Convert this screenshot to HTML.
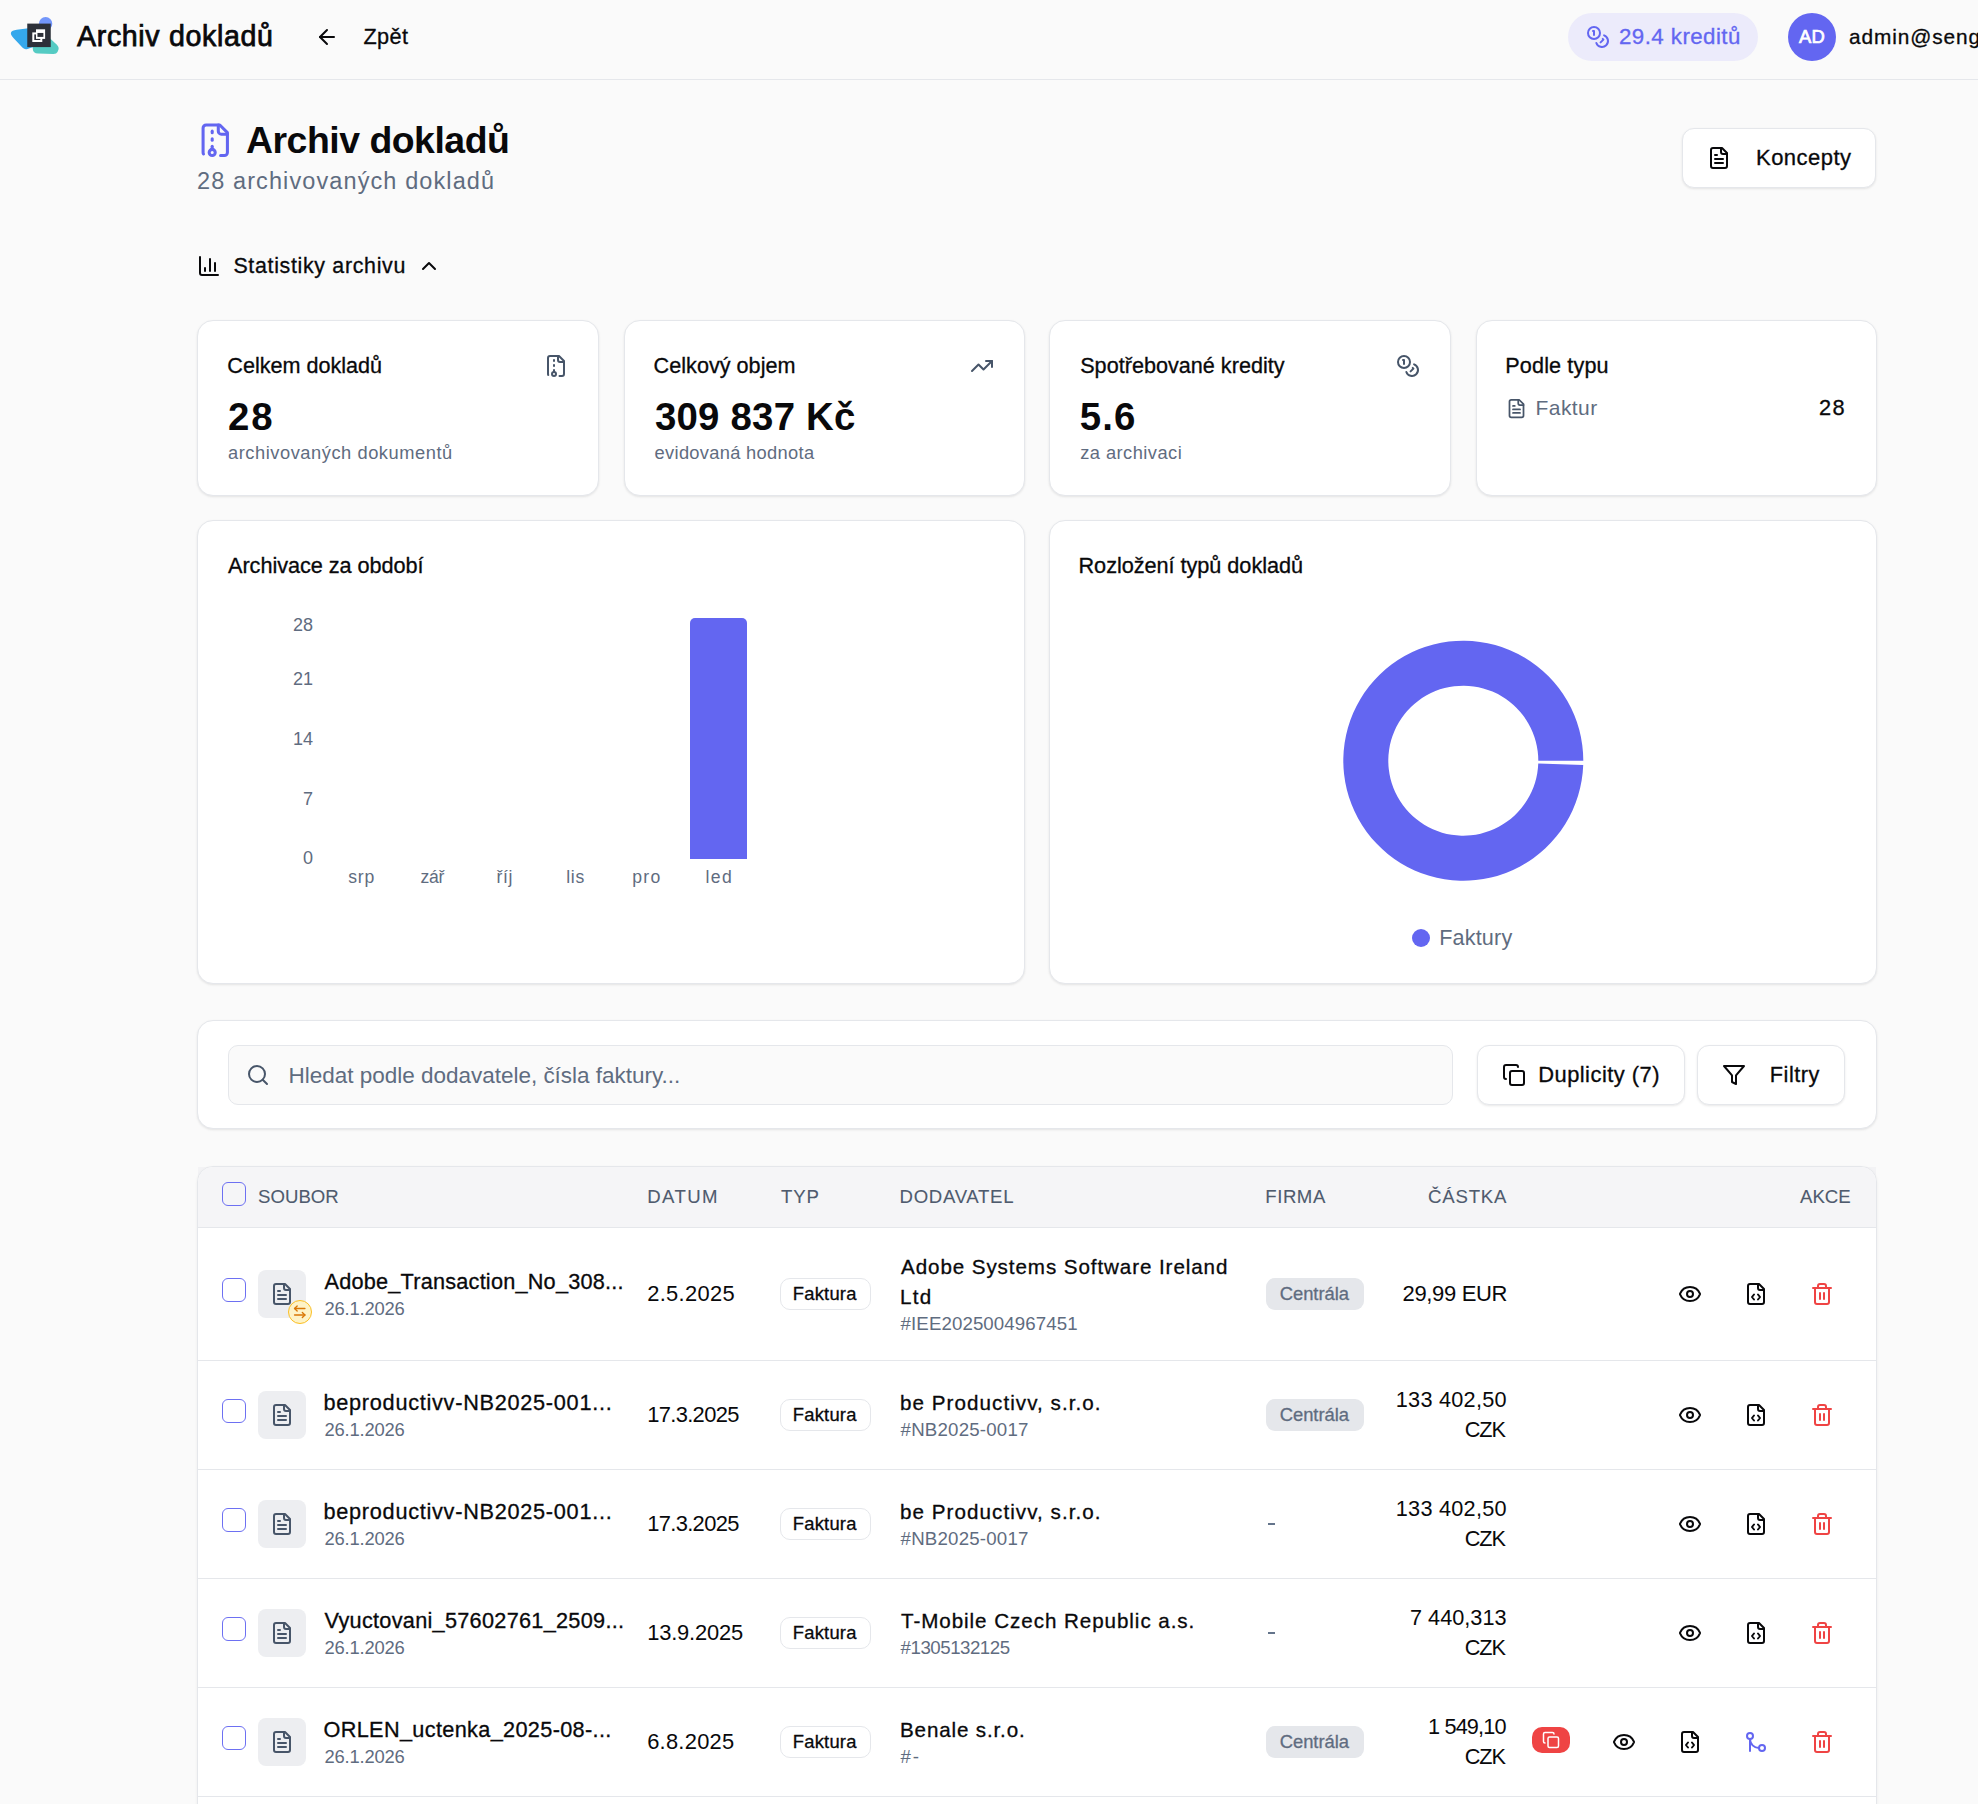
<!DOCTYPE html>
<html lang="cs"><head>
<meta charset="utf-8">
<title>Archiv dokladů</title>
<style>
html,body{margin:0;padding:0}
body{width:1978px;height:1804px;overflow:hidden;position:relative;background:#fafafa;font-family:"Liberation Sans",sans-serif;color:#09090b}
.t{position:absolute;white-space:nowrap;margin:0}
.b{position:absolute;box-sizing:border-box}
.i{position:absolute;fill:none;stroke:currentColor;stroke-width:2;stroke-linecap:round;stroke-linejoin:round;overflow:visible}
.card{position:absolute;box-sizing:border-box;background:#fff;border:1px solid #e5e7eb;border-radius:16px;box-shadow:0 1px 3px rgba(0,0,0,.06),0 1px 2px rgba(0,0,0,.04)}
.g{color:#5f6c80}
.m{-webkit-text-stroke:0.3px currentColor}
.bd{font-weight:700}
.cb{position:absolute;box-sizing:border-box;width:24px;height:24px;border:1.4px solid #6d70f2;border-radius:6px;background:#fff}
.fbox{position:absolute;width:48px;height:48px;border-radius:8px;background:#edeef1}
.badge{position:absolute;box-sizing:border-box;height:32px;border-radius:10px}
.rowline{position:absolute;left:198px;width:1678px;height:1px;background:#e5e7eb}
</style>
</head>
<body>
<!-- HEADER -->
<div class="b" style="left:0;top:79px;width:1978px;height:1px;background:#e5e7eb"></div>
<svg style="position:absolute;left:0;top:0;width:70px;height:70px" viewBox="0 0 70 70">
  <circle cx="45.6" cy="23.7" r="6.7" fill="#7396fa"></circle>
  <path d="M16.72 29.82 L40 26.8 L40 44.5 L27.53 48.9 Q24.7 49.9 22.63 47.73 L13.7 38.34 Q6.8 31.1 16.72 29.82 Z" fill="#35a8ec"></path>
  <path d="M42 31 L55 43 Q59.5 46.5 58.5 49.5 L57.5 52 Q56.5 54.2 53 54 L38 53.5 Q33 53.3 32.8 49 L32.5 44 Z" fill="#55cbc3"></path>
  <rect x="27.25" y="23.6" width="23.5" height="23.5" fill="#2d3039"></rect>
  <rect x="33.3" y="33.4" width="8" height="7.6" fill="none" stroke="#fff" stroke-width="2"></rect>
  <rect x="36" y="29.3" width="9.1" height="9.6" fill="#fff"></rect>
  <rect x="37.45" y="32.95" width="5.95" height="3.95" fill="#2d3039"></rect>
</svg>
<div class="t" style="-webkit-text-stroke: 0.75px rgb(9, 9, 11); font-size: 28.6px; line-height: 28.6px; top: 22px; letter-spacing: 0.643px; left: 77px;">Archiv dokladů</div>
<svg class="i" style="left:315px;top:25px;width:24px;height:24px;color:#09090b" viewBox="0 0 24 24"><path d="m12 19-7-7 7-7"></path><path d="M19 12H5"></path></svg>
<div class="t m" style="font-size: 21.7px; line-height: 21.7px; top: 26.01px; letter-spacing: 0.376px; left: 363.5px;">Zpět</div>

<div class="b" style="left:1568px;top:13px;width:190px;height:48px;border-radius:24px;background:#ecebfb"></div>
<svg class="i" style="left:1586px;top:25px;width:24px;height:24px;color:#6366f1" viewBox="0 0 24 24"><circle cx="8" cy="8" r="6"></circle><path d="M18.09 10.37A6 6 0 1 1 10.34 18"></path><path d="M7 6h1v4"></path><path d="m16.71 13.88.7.71-2.82 2.82"></path></svg>
<div class="t m" style="color: rgb(99, 102, 241); font-size: 22.3px; line-height: 22.3px; top: 26px; letter-spacing: 0.444px; left: 1619px;">29.4 kreditů</div>
<div class="b" style="left:1788px;top:13px;width:48px;height:48px;border-radius:50%;background:#6366f1"></div>
<div class="t" style="color: rgb(255, 255, 255); -webkit-text-stroke: 0.7px rgb(255, 255, 255); font-size: 18.4px; line-height: 18.4px; top: 28.3px; letter-spacing: 0.234px; left: 1799px;">AD</div>
<div class="t m" style="font-size: 20.8px; line-height: 20.8px; top: 27.01px; letter-spacing: 0.9px; left: 1849px;">admin@seng.cz</div>

<!-- PAGE TITLE -->
<svg class="i" style="left:197px;top:121.5px;width:36.5px;height:36.5px;color:#6366f1" viewBox="0 0 24 24"><path d="M10 12v-1"></path><path d="M10 18v-2"></path><path d="M10 7V6"></path><path d="M14 2v4a2 2 0 0 0 2 2h4"></path><path d="M15.5 22H18a2 2 0 0 0 2-2V7l-5-5H6a2 2 0 0 0-2 2v16a2 2 0 0 0 .274 1.01"></path><circle cx="10" cy="20" r="2"></circle></svg>
<div class="t bd" style="font-size: 37.4px; line-height: 37.4px; top: 122.01px; letter-spacing: -0.481px; left: 246px;">Archiv dokladů</div>
<div class="t g" style="font-size: 23.5px; line-height: 23.5px; top: 170.21px; letter-spacing: 1.102px; left: 197px;">28 archivovaných dokladů</div>

<div class="card" style="left:1682px;top:128px;width:194px;height:60px;border-radius:12px"></div>
<svg class="i" style="left:1707px;top:146px;width:24px;height:24px;color:#09090b" viewBox="0 0 24 24"><path d="M15 2H6a2 2 0 0 0-2 2v16a2 2 0 0 0 2 2h12a2 2 0 0 0 2-2V7Z"></path><path d="M14 2v4a2 2 0 0 0 2 2h4"></path><path d="M10 9H8"></path><path d="M16 13H8"></path><path d="M16 17H8"></path></svg>
<div class="t m" style="font-size: 22px; line-height: 22px; top: 147px; letter-spacing: 0.467px; left: 1756px;">Koncepty</div>

<!-- STATS TOGGLE -->
<svg class="i" style="left:197px;top:254px;width:24px;height:24px;color:#09090b" viewBox="0 0 24 24"><path d="M3 3v16a2 2 0 0 0 2 2h16"></path><path d="M18 17V9"></path><path d="M13 17V5"></path><path d="M8 17v-3"></path></svg>
<div class="t m" style="font-size: 21.4px; line-height: 21.4px; top: 255.51px; letter-spacing: 0.677px; left: 233.4px;">Statistiky archivu</div>
<svg class="i" style="left:417px;top:254px;width:24px;height:24px;color:#09090b" viewBox="0 0 24 24"><path d="m18 15-6-6-6 6"></path></svg>

<!-- STAT CARDS -->
<div class="card" style="left:197px;top:320px;width:402px;height:176px"></div>
<div class="card" style="left:624px;top:320px;width:401px;height:176px"></div>
<div class="card" style="left:1049px;top:320px;width:402px;height:176px"></div>
<div class="card" style="left:1476px;top:320px;width:401px;height:176px"></div>

<div class="t m" style="font-size: 21.6px; line-height: 21.6px; top: 355.02px; letter-spacing: -0.01px; left: 227.3px;">Celkem dokladů</div>
<svg class="i" style="left:543.7px;top:354px;width:24px;height:24px;color:#475569;stroke-width:2" viewBox="0 0 24 24"><path d="M10 12v-1"></path><path d="M10 18v-2"></path><path d="M10 7V6"></path><path d="M14 2v4a2 2 0 0 0 2 2h4"></path><path d="M15.5 22H18a2 2 0 0 0 2-2V7l-5-5H6a2 2 0 0 0-2 2v16a2 2 0 0 0 .274 1.01"></path><circle cx="10" cy="20" r="2"></circle></svg>
<div class="t bd" style="font-size: 38.4px; line-height: 38.4px; top: 398px; letter-spacing: 1.949px; left: 228px;">28</div>
<div class="t g" style="font-size: 18.3px; line-height: 18.3px; top: 443.51px; letter-spacing: 0.536px; left: 228px;">archivovaných dokumentů</div>

<div class="t m" style="font-size: 21.6px; line-height: 21.6px; top: 355.3px; letter-spacing: 0.023px; left: 653.6px;">Celkový objem</div>
<svg class="i" style="left:970px;top:353.6px;width:24px;height:24px;color:#475569;stroke-width:2" viewBox="0 0 24 24"><polyline points="22 7 13.5 15.5 8.5 10.5 2 17"></polyline><polyline points="16 7 22 7 22 13"></polyline></svg>
<div class="t bd" style="font-size: 38.4px; line-height: 38.4px; top: 397.8px; letter-spacing: 0.204px; left: 655px;">309 837 Kč</div>
<div class="t g" style="font-size: 18.3px; line-height: 18.3px; top: 443.8px; letter-spacing: 0.31px; left: 654.6px;">evidovaná hodnota</div>

<div class="t m" style="font-size: 21.6px; line-height: 21.6px; top: 355.02px; letter-spacing: 0.017px; left: 1080.2px;">Spotřebované kredity</div>
<svg class="i" style="left:1396px;top:354px;width:24px;height:24px;color:#475569;stroke-width:2" viewBox="0 0 24 24"><circle cx="8" cy="8" r="6"></circle><path d="M18.09 10.37A6 6 0 1 1 10.34 18"></path><path d="M7 6h1v4"></path><path d="m16.71 13.88.7.71-2.82 2.82"></path></svg>
<div class="t bd" style="font-size: 38.4px; line-height: 38.4px; top: 397.91px; letter-spacing: 1.141px; left: 1079.7px;">5.6</div>
<div class="t g" style="font-size: 18.3px; line-height: 18.3px; top: 443.71px; letter-spacing: 0.458px; left: 1080.2px;">za archivaci</div>

<div class="t m" style="font-size: 21.6px; line-height: 21.6px; top: 355.02px; letter-spacing: 0.141px; left: 1505.3px;">Podle typu</div>
<svg class="i" style="left:1505.5px;top:398px;width:21px;height:21px;color:#475569;stroke-width:2" viewBox="0 0 24 24"><path d="M15 2H6a2 2 0 0 0-2 2v16a2 2 0 0 0 2 2h12a2 2 0 0 0 2-2V7Z"></path><path d="M14 2v4a2 2 0 0 0 2 2h4"></path><path d="M10 9H8"></path><path d="M16 13H8"></path><path d="M16 17H8"></path></svg>
<div class="t g" style="font-size: 21px; line-height: 21px; top: 396.51px; letter-spacing: 0.436px; left: 1535.5px;">Faktur</div>
<div class="t m" style="font-size: 21.8px; line-height: 21.8px; top: 396.5px; letter-spacing: 1.378px; left: 1819px;">28</div>

<!-- CHARTS -->
<div class="card" style="left:197px;top:520px;width:828px;height:464px"></div>
<div class="card" style="left:1049px;top:520px;width:828px;height:464px"></div>
<div class="t m" style="font-size: 21.7px; line-height: 21.7px; top: 554.81px; letter-spacing: -0.049px; left: 228px;">Archivace za období</div>
<div class="t g" style="font-size: 18px; line-height: 18px; top: 615.8px; left: 292.99px;">28</div>
<div class="t g" style="font-size: 18px; line-height: 18px; top: 669.8px; left: 292.99px;">21</div>
<div class="t g" style="font-size: 18px; line-height: 18px; top: 730.01px; left: 292.99px;">14</div>
<div class="t g" style="font-size: 18px; line-height: 18px; top: 789.6px; left: 303px;">7</div>
<div class="t g" style="font-size: 18px; line-height: 18px; top: 849.41px; left: 303px;">0</div>
<div class="b" style="left:690px;top:618.3px;width:57px;height:240.3px;background:#6366f1;border-radius:5px 5px 0 0"></div>
<div class="t g" style="font-size: 17.6px; line-height: 17.6px; top: 868.71px; letter-spacing: 0.772px; left: 348.2px;">srp</div>
<div class="t g" style="font-size: 17.6px; line-height: 17.6px; top: 868.71px; letter-spacing: -0.291px; left: 420.5px;">zář</div>
<div class="t g" style="font-size: 17.6px; line-height: 17.6px; top: 868.71px; letter-spacing: 0.627px; left: 496.6px;">říj</div>
<div class="t g" style="font-size: 17.6px; line-height: 17.6px; top: 868.71px; letter-spacing: 0.641px; left: 566.3px;">lis</div>
<div class="t g" style="font-size: 17.6px; line-height: 17.6px; top: 868.71px; letter-spacing: 1.228px; left: 632.3px;">pro</div>
<div class="t g" style="font-size: 17.6px; line-height: 17.6px; top: 868.71px; letter-spacing: 1.403px; left: 705.5px;">led</div>

<div class="t m" style="font-size: 21.7px; line-height: 21.7px; top: 554.81px; letter-spacing: -0.042px; left: 1078.5px;">Rozložení typů dokladů</div>
<svg style="position:absolute;left:0;top:0;width:1978px;height:1000px;overflow:visible" viewBox="0 0 1978 1000"><path fill="#6366f1" d="M1583.22 765.10 A120 120 0 1 1 1583.3 760.7 L1538.3 760.7 A75 75 0 1 0 1538.25 763.45 Z"></path></svg>
<div class="b" style="left:1412px;top:929px;width:18px;height:18px;border-radius:50%;background:#6366f1"></div>
<div class="t g" style="font-size: 21.6px; line-height: 21.6px; top: 926.91px; letter-spacing: 0.167px; left: 1439.2px;">Faktury</div>

<!-- SEARCH -->
<div class="card" style="left:197px;top:1020px;width:1680px;height:109px"></div>
<div class="b" style="left:228px;top:1045px;width:1225px;height:60px;border-radius:10px;background:#fafafa;border:1px solid #e5e7eb"></div>
<svg class="i" style="left:246px;top:1063px;width:24px;height:24px;color:#475569" viewBox="0 0 24 24"><circle cx="11" cy="11" r="8"></circle><path d="m21 21-4.3-4.3"></path></svg>
<div class="t g" style="font-size: 22.5px; line-height: 22.5px; top: 1064.91px; letter-spacing: -0.016px; left: 288.6px;">Hledat podle dodavatele, čísla faktury...</div>
<div class="card" style="left:1477px;top:1045px;width:208px;height:60px;border-radius:12px"></div>
<svg class="i" style="left:1502px;top:1063px;width:24px;height:24px;color:#09090b" viewBox="0 0 24 24"><rect width="14" height="14" x="8" y="8" rx="2" ry="2"></rect><path d="M4 16c-1.1 0-2-.9-2-2V4c0-1.1.9-2 2-2h10c1.1 0 2 .9 2 2"></path></svg>
<div class="t m" style="font-size: 21.9px; line-height: 21.9px; top: 1063.91px; letter-spacing: 0.478px; left: 1538.2px;">Duplicity (7)</div>
<div class="card" style="left:1697px;top:1045px;width:148px;height:60px;border-radius:12px"></div>
<svg class="i" style="left:1722px;top:1063px;width:24px;height:24px;color:#09090b" viewBox="0 0 24 24"><polygon points="22 3 2 3 10 12.46 10 19 14 21 14 12.46 22 3"></polygon></svg>
<div class="t m" style="font-size: 21.7px; line-height: 21.7px; top: 1064.01px; letter-spacing: 0.534px; left: 1769.8px;">Filtry</div>

<div class="b" style="left:1862px;top:1167px;width:14px;height:14px;background:#f3f3f5"></div>
<div class="b" style="left:198px;top:1167px;width:14px;height:14px;background:#f3f3f5"></div>
<div class="b" style="left:197px;top:1166px;width:1680px;height:700px;background:#fff;border:1px solid #e5e7eb;border-radius:16px;box-shadow:0 1px 3px rgba(0,0,0,.06)"></div>
<div class="b" style="left:198px;top:1167px;width:1678px;height:61px;background:#f5f5f7;border-radius:15px 15px 0 0;border-bottom:1px solid #e5e7eb"></div>
<div class="cb" style="left:222px;top:1182px;background:transparent"></div>
<div class="t " style="color: rgb(79, 91, 110); -webkit-text-stroke: 0.1px rgb(79, 91, 110); font-size: 18.6px; line-height: 18.6px; top: 1188px; letter-spacing: 0.029px; left: 258px;">SOUBOR</div>
<div class="t " style="color: rgb(79, 91, 110); -webkit-text-stroke: 0.1px rgb(79, 91, 110); font-size: 18.6px; line-height: 18.6px; top: 1188px; letter-spacing: 1.341px; left: 647.3px;">DATUM</div>
<div class="t " style="color: rgb(79, 91, 110); -webkit-text-stroke: 0.1px rgb(79, 91, 110); font-size: 18.6px; line-height: 18.6px; top: 1188px; letter-spacing: 0.82px; left: 781px;">TYP</div>
<div class="t " style="color: rgb(79, 91, 110); -webkit-text-stroke: 0.1px rgb(79, 91, 110); font-size: 18.6px; line-height: 18.6px; top: 1188px; letter-spacing: 0.682px; left: 899.6px;">DODAVATEL</div>
<div class="t " style="color: rgb(79, 91, 110); -webkit-text-stroke: 0.1px rgb(79, 91, 110); font-size: 18.6px; line-height: 18.6px; top: 1188px; letter-spacing: 0.54px; left: 1265.3px;">FIRMA</div>
<div class="t " style="color: rgb(79, 91, 110); -webkit-text-stroke: 0.1px rgb(79, 91, 110); font-size: 18.6px; line-height: 18.6px; top: 1188px; letter-spacing: 0.802px; left: 1428px;">ČÁSTKA</div>
<div class="t " style="color: rgb(79, 91, 110); -webkit-text-stroke: 0.1px rgb(79, 91, 110); font-size: 18.6px; line-height: 18.6px; top: 1188px; letter-spacing: 0.023px; left: 1800px;">AKCE</div>
<div class="rowline" style="top:1360px"></div>
<div class="cb" style="left:222px;top:1278px"></div>
<div class="fbox" style="left:258px;top:1270px"></div>
<svg class="i" style="left:270px;top:1282px;width:24px;height:24px;color:#475569;stroke-width:2" viewBox="0 0 24 24"><path d="M15 2H6a2 2 0 0 0-2 2v16a2 2 0 0 0 2 2h12a2 2 0 0 0 2-2V7Z"></path><path d="M14 2v4a2 2 0 0 0 2 2h4"></path><path d="M10 9H8"></path><path d="M16 13H8"></path><path d="M16 17H8"></path></svg>
<div class="b" style="left:288px;top:1300px;width:24px;height:24px;border-radius:50%;background:#fef3c7;border:1px solid #fbbf24"></div>
<svg class="i" style="left:292px;top:1303.7px;width:15.5px;height:15.5px;color:#d97706;stroke-width:2.1" viewBox="0 0 24 24"><path d="M8 3 4 7l4 4"></path><path d="M4 7h16"></path><path d="m16 21 4-4-4-4"></path><path d="M20 17H4"></path></svg>
<div class="t m" style="font-size: 21.7px; line-height: 21.7px; top: 1271.01px; letter-spacing: 0.217px; left: 324.5px;">Adobe_Transaction_No_308...</div>
<div class="t g" style="font-size: 18.4px; line-height: 18.4px; top: 1299.91px; letter-spacing: -0.186px; left: 324.5px;">26.1.2026</div>
<div class="t " style="font-size: 21.9px; line-height: 21.9px; top: 1282.61px; letter-spacing: 0.309px; left: 647.2px;">2.5.2025</div>
<div class="badge" style="left:780px;top:1278px;width:91px;background:#fff;border:1px solid #e5e7eb"></div>
<div class="t m" style="font-size: 18.4px; line-height: 18.4px; top: 1284.71px; letter-spacing: 0.214px; left: 792.8px;">Faktura</div>
<div class="t m" style="font-size: 20.6px; line-height: 20.6px; top: 1256.7px; letter-spacing: 0.915px; left: 901px;">Adobe Systems Software Ireland</div>
<div class="t m" style="font-size: 20.6px; line-height: 20.6px; top: 1286.76px; letter-spacing: 1.263px; left: 900px;">Ltd</div>
<div class="t g" style="font-size: 18.7px; line-height: 18.7px; top: 1314.61px; letter-spacing: 0.086px; left: 900.6px;">#IEE2025004967451</div>
<div class="badge" style="left:1266px;top:1278px;width:98px;background:#e5e7eb;border-radius:9px"></div>
<div class="t g m" style="font-size: 18.4px; line-height: 18.4px; top: 1284.61px; letter-spacing: -0.026px; left: 1279.7px;">Centrála</div>
<div class="t " style="font-size: 22px; line-height: 22px; top: 1283px; letter-spacing: -0.353px; left: 1402.6px;">29,99 EUR</div>
<svg class="i" style="left:1678px;top:1282px;width:24px;height:24px;color:#09090b;stroke-width:2" viewBox="0 0 24 24"><path d="M2.062 12.348a1 1 0 0 1 0-.696 10.75 10.75 0 0 1 19.876 0 1 1 0 0 1 0 .696 10.75 10.75 0 0 1-19.876 0"></path><circle cx="12" cy="12" r="3"></circle></svg>
<svg class="i" style="left:1744px;top:1282px;width:24px;height:24px;color:#09090b;stroke-width:2" viewBox="0 0 24 24"><path d="M10 12.5 8 15l2 2.5"></path><path d="m14 12.5 2 2.5-2 2.5"></path><path d="M14 2v4a2 2 0 0 0 2 2h4"></path><path d="M15 2H6a2 2 0 0 0-2 2v16a2 2 0 0 0 2 2h12a2 2 0 0 0 2-2V7z"></path></svg>
<svg class="i" style="left:1810px;top:1282px;width:24px;height:24px;color:#ef4444;stroke-width:2" viewBox="0 0 24 24"><path d="M3 6h18"></path><path d="M19 6v14c0 1-1 2-2 2H7c-1 0-2-1-2-2V6"></path><path d="M8 6V4c0-1 1-2 2-2h4c1 0 2 1 2 2v2"></path><line x1="10" x2="10" y1="11" y2="17"></line><line x1="14" x2="14" y1="11" y2="17"></line></svg>
<div class="rowline" style="top:1469px"></div>
<div class="cb" style="left:222px;top:1399px"></div>
<div class="fbox" style="left:258px;top:1391px"></div>
<svg class="i" style="left:270px;top:1403px;width:24px;height:24px;color:#475569;stroke-width:2" viewBox="0 0 24 24"><path d="M15 2H6a2 2 0 0 0-2 2v16a2 2 0 0 0 2 2h12a2 2 0 0 0 2-2V7Z"></path><path d="M14 2v4a2 2 0 0 0 2 2h4"></path><path d="M10 9H8"></path><path d="M16 13H8"></path><path d="M16 17H8"></path></svg>
<div class="t m" style="font-size: 21.7px; line-height: 21.7px; top: 1392.01px; letter-spacing: 0.727px; left: 323.5px;">beproductivv-NB2025-001...</div>
<div class="t g" style="font-size: 18.4px; line-height: 18.4px; top: 1420.91px; letter-spacing: -0.186px; left: 324.5px;">26.1.2026</div>
<div class="t " style="font-size: 21.9px; line-height: 21.9px; top: 1403.61px; letter-spacing: -0.651px; left: 647.2px;">17.3.2025</div>
<div class="badge" style="left:780px;top:1399px;width:91px;background:#fff;border:1px solid #e5e7eb"></div>
<div class="t m" style="font-size: 18.4px; line-height: 18.4px; top: 1405.71px; letter-spacing: 0.214px; left: 792.8px;">Faktura</div>
<div class="t m" style="font-size: 20.6px; line-height: 20.6px; top: 1393.01px; letter-spacing: 1.06px; left: 900px;">be Productivv, s.r.o.</div>
<div class="t g" style="font-size: 18.7px; line-height: 18.7px; top: 1420.71px; letter-spacing: 0.188px; left: 900.6px;">#NB2025-0017</div>
<div class="badge" style="left:1266px;top:1399px;width:98px;background:#e5e7eb;border-radius:9px"></div>
<div class="t g m" style="font-size: 18.4px; line-height: 18.4px; top: 1405.61px; letter-spacing: -0.026px; left: 1279.7px;">Centrála</div>
<div class="t " style="font-size: 21.7px; line-height: 21.7px; top: 1388.71px; letter-spacing: 0.246px; left: 1395.8px;">133 402,50</div>
<div class="t " style="font-size: 21.7px; line-height: 21.7px; top: 1418.71px; letter-spacing: -1.105px; left: 1464.8px;">CZK</div>
<svg class="i" style="left:1678px;top:1403px;width:24px;height:24px;color:#09090b;stroke-width:2" viewBox="0 0 24 24"><path d="M2.062 12.348a1 1 0 0 1 0-.696 10.75 10.75 0 0 1 19.876 0 1 1 0 0 1 0 .696 10.75 10.75 0 0 1-19.876 0"></path><circle cx="12" cy="12" r="3"></circle></svg>
<svg class="i" style="left:1744px;top:1403px;width:24px;height:24px;color:#09090b;stroke-width:2" viewBox="0 0 24 24"><path d="M10 12.5 8 15l2 2.5"></path><path d="m14 12.5 2 2.5-2 2.5"></path><path d="M14 2v4a2 2 0 0 0 2 2h4"></path><path d="M15 2H6a2 2 0 0 0-2 2v16a2 2 0 0 0 2 2h12a2 2 0 0 0 2-2V7z"></path></svg>
<svg class="i" style="left:1810px;top:1403px;width:24px;height:24px;color:#ef4444;stroke-width:2" viewBox="0 0 24 24"><path d="M3 6h18"></path><path d="M19 6v14c0 1-1 2-2 2H7c-1 0-2-1-2-2V6"></path><path d="M8 6V4c0-1 1-2 2-2h4c1 0 2 1 2 2v2"></path><line x1="10" x2="10" y1="11" y2="17"></line><line x1="14" x2="14" y1="11" y2="17"></line></svg>
<div class="rowline" style="top:1578px"></div>
<div class="cb" style="left:222px;top:1508px"></div>
<div class="fbox" style="left:258px;top:1500px"></div>
<svg class="i" style="left:270px;top:1512px;width:24px;height:24px;color:#475569;stroke-width:2" viewBox="0 0 24 24"><path d="M15 2H6a2 2 0 0 0-2 2v16a2 2 0 0 0 2 2h12a2 2 0 0 0 2-2V7Z"></path><path d="M14 2v4a2 2 0 0 0 2 2h4"></path><path d="M10 9H8"></path><path d="M16 13H8"></path><path d="M16 17H8"></path></svg>
<div class="t m" style="font-size: 21.7px; line-height: 21.7px; top: 1501.01px; letter-spacing: 0.727px; left: 323.5px;">beproductivv-NB2025-001...</div>
<div class="t g" style="font-size: 18.4px; line-height: 18.4px; top: 1529.91px; letter-spacing: -0.186px; left: 324.5px;">26.1.2026</div>
<div class="t " style="font-size: 21.9px; line-height: 21.9px; top: 1512.61px; letter-spacing: -0.651px; left: 647.2px;">17.3.2025</div>
<div class="badge" style="left:780px;top:1508px;width:91px;background:#fff;border:1px solid #e5e7eb"></div>
<div class="t m" style="font-size: 18.4px; line-height: 18.4px; top: 1514.71px; letter-spacing: 0.214px; left: 792.8px;">Faktura</div>
<div class="t m" style="font-size: 20.6px; line-height: 20.6px; top: 1502.01px; letter-spacing: 1.06px; left: 900px;">be Productivv, s.r.o.</div>
<div class="t g" style="font-size: 18.7px; line-height: 18.7px; top: 1529.71px; letter-spacing: 0.188px; left: 900.6px;">#NB2025-0017</div>
<div class="b" style="left:1267.5px;top:1523px;width:7px;height:2px;background:#64748b"></div>
<div class="t " style="font-size: 21.7px; line-height: 21.7px; top: 1497.71px; letter-spacing: 0.246px; left: 1395.8px;">133 402,50</div>
<div class="t " style="font-size: 21.7px; line-height: 21.7px; top: 1527.71px; letter-spacing: -1.105px; left: 1464.8px;">CZK</div>
<svg class="i" style="left:1678px;top:1512px;width:24px;height:24px;color:#09090b;stroke-width:2" viewBox="0 0 24 24"><path d="M2.062 12.348a1 1 0 0 1 0-.696 10.75 10.75 0 0 1 19.876 0 1 1 0 0 1 0 .696 10.75 10.75 0 0 1-19.876 0"></path><circle cx="12" cy="12" r="3"></circle></svg>
<svg class="i" style="left:1744px;top:1512px;width:24px;height:24px;color:#09090b;stroke-width:2" viewBox="0 0 24 24"><path d="M10 12.5 8 15l2 2.5"></path><path d="m14 12.5 2 2.5-2 2.5"></path><path d="M14 2v4a2 2 0 0 0 2 2h4"></path><path d="M15 2H6a2 2 0 0 0-2 2v16a2 2 0 0 0 2 2h12a2 2 0 0 0 2-2V7z"></path></svg>
<svg class="i" style="left:1810px;top:1512px;width:24px;height:24px;color:#ef4444;stroke-width:2" viewBox="0 0 24 24"><path d="M3 6h18"></path><path d="M19 6v14c0 1-1 2-2 2H7c-1 0-2-1-2-2V6"></path><path d="M8 6V4c0-1 1-2 2-2h4c1 0 2 1 2 2v2"></path><line x1="10" x2="10" y1="11" y2="17"></line><line x1="14" x2="14" y1="11" y2="17"></line></svg>
<div class="rowline" style="top:1687px"></div>
<div class="cb" style="left:222px;top:1617px"></div>
<div class="fbox" style="left:258px;top:1609px"></div>
<svg class="i" style="left:270px;top:1621px;width:24px;height:24px;color:#475569;stroke-width:2" viewBox="0 0 24 24"><path d="M15 2H6a2 2 0 0 0-2 2v16a2 2 0 0 0 2 2h12a2 2 0 0 0 2-2V7Z"></path><path d="M14 2v4a2 2 0 0 0 2 2h4"></path><path d="M10 9H8"></path><path d="M16 13H8"></path><path d="M16 17H8"></path></svg>
<div class="t m" style="font-size: 21.7px; line-height: 21.7px; top: 1610.01px; letter-spacing: 0.281px; left: 324.5px;">Vyuctovani_57602761_2509...</div>
<div class="t g" style="font-size: 18.4px; line-height: 18.4px; top: 1638.91px; letter-spacing: -0.186px; left: 324.5px;">26.1.2026</div>
<div class="t " style="font-size: 21.9px; line-height: 21.9px; top: 1621.61px; letter-spacing: -0.176px; left: 647.2px;">13.9.2025</div>
<div class="badge" style="left:780px;top:1617px;width:91px;background:#fff;border:1px solid #e5e7eb"></div>
<div class="t m" style="font-size: 18.4px; line-height: 18.4px; top: 1623.71px; letter-spacing: 0.214px; left: 792.8px;">Faktura</div>
<div class="t m" style="font-size: 20.6px; line-height: 20.6px; top: 1611.01px; letter-spacing: 0.944px; left: 901px;">T-Mobile Czech Republic a.s.</div>
<div class="t g" style="font-size: 18.7px; line-height: 18.7px; top: 1638.71px; letter-spacing: -0.483px; left: 900.6px;">#1305132125</div>
<div class="b" style="left:1267.5px;top:1632px;width:7px;height:2px;background:#64748b"></div>
<div class="t " style="font-size: 21.7px; line-height: 21.7px; top: 1606.71px; letter-spacing: 0.01px; left: 1410px;">7 440,313</div>
<div class="t " style="font-size: 21.7px; line-height: 21.7px; top: 1636.71px; letter-spacing: -1.105px; left: 1464.8px;">CZK</div>
<svg class="i" style="left:1678px;top:1621px;width:24px;height:24px;color:#09090b;stroke-width:2" viewBox="0 0 24 24"><path d="M2.062 12.348a1 1 0 0 1 0-.696 10.75 10.75 0 0 1 19.876 0 1 1 0 0 1 0 .696 10.75 10.75 0 0 1-19.876 0"></path><circle cx="12" cy="12" r="3"></circle></svg>
<svg class="i" style="left:1744px;top:1621px;width:24px;height:24px;color:#09090b;stroke-width:2" viewBox="0 0 24 24"><path d="M10 12.5 8 15l2 2.5"></path><path d="m14 12.5 2 2.5-2 2.5"></path><path d="M14 2v4a2 2 0 0 0 2 2h4"></path><path d="M15 2H6a2 2 0 0 0-2 2v16a2 2 0 0 0 2 2h12a2 2 0 0 0 2-2V7z"></path></svg>
<svg class="i" style="left:1810px;top:1621px;width:24px;height:24px;color:#ef4444;stroke-width:2" viewBox="0 0 24 24"><path d="M3 6h18"></path><path d="M19 6v14c0 1-1 2-2 2H7c-1 0-2-1-2-2V6"></path><path d="M8 6V4c0-1 1-2 2-2h4c1 0 2 1 2 2v2"></path><line x1="10" x2="10" y1="11" y2="17"></line><line x1="14" x2="14" y1="11" y2="17"></line></svg>
<div class="rowline" style="top:1796px"></div>
<div class="cb" style="left:222px;top:1726px"></div>
<div class="fbox" style="left:258px;top:1718px"></div>
<svg class="i" style="left:270px;top:1730px;width:24px;height:24px;color:#475569;stroke-width:2" viewBox="0 0 24 24"><path d="M15 2H6a2 2 0 0 0-2 2v16a2 2 0 0 0 2 2h12a2 2 0 0 0 2-2V7Z"></path><path d="M14 2v4a2 2 0 0 0 2 2h4"></path><path d="M10 9H8"></path><path d="M16 13H8"></path><path d="M16 17H8"></path></svg>
<div class="t m" style="font-size: 21.7px; line-height: 21.7px; top: 1719.01px; letter-spacing: 0.339px; left: 323.5px;">ORLEN_uctenka_2025-08-...</div>
<div class="t g" style="font-size: 18.4px; line-height: 18.4px; top: 1747.91px; letter-spacing: -0.186px; left: 324.5px;">26.1.2026</div>
<div class="t " style="font-size: 21.9px; line-height: 21.9px; top: 1730.61px; letter-spacing: 0.252px; left: 647.2px;">6.8.2025</div>
<div class="badge" style="left:780px;top:1726px;width:91px;background:#fff;border:1px solid #e5e7eb"></div>
<div class="t m" style="font-size: 18.4px; line-height: 18.4px; top: 1732.71px; letter-spacing: 0.214px; left: 792.8px;">Faktura</div>
<div class="t m" style="font-size: 20.6px; line-height: 20.6px; top: 1720.01px; letter-spacing: 0.853px; left: 900px;">Benale s.r.o.</div>
<div class="t g" style="font-size: 18.7px; line-height: 18.7px; top: 1747.71px; letter-spacing: 1.707px; left: 900.6px;">#-</div>
<div class="badge" style="left:1266px;top:1726px;width:98px;background:#e5e7eb;border-radius:9px"></div>
<div class="t g m" style="font-size: 18.4px; line-height: 18.4px; top: 1732.61px; letter-spacing: -0.026px; left: 1279.7px;">Centrála</div>
<div class="t " style="font-size: 21.7px; line-height: 21.7px; top: 1715.71px; letter-spacing: -0.837px; left: 1428px;">1 549,10</div>
<div class="t " style="font-size: 21.7px; line-height: 21.7px; top: 1745.71px; letter-spacing: -1.105px; left: 1464.8px;">CZK</div>
<div class="b" style="left:1532px;top:1727px;width:38px;height:26px;border-radius:10px;background:#ef4444"></div>
<svg class="i" style="left:1542px;top:1731px;width:18px;height:18px;color:#fff;stroke-width:2" viewBox="0 0 24 24"><rect width="14" height="14" x="8" y="8" rx="2" ry="2"></rect><path d="M4 16c-1.1 0-2-.9-2-2V4c0-1.1.9-2 2-2h10c1.1 0 2 .9 2 2"></path></svg>
<svg class="i" style="left:1612px;top:1730px;width:24px;height:24px;color:#09090b;stroke-width:2" viewBox="0 0 24 24"><path d="M2.062 12.348a1 1 0 0 1 0-.696 10.75 10.75 0 0 1 19.876 0 1 1 0 0 1 0 .696 10.75 10.75 0 0 1-19.876 0"></path><circle cx="12" cy="12" r="3"></circle></svg>
<svg class="i" style="left:1678px;top:1730px;width:24px;height:24px;color:#09090b;stroke-width:2" viewBox="0 0 24 24"><path d="M10 12.5 8 15l2 2.5"></path><path d="m14 12.5 2 2.5-2 2.5"></path><path d="M14 2v4a2 2 0 0 0 2 2h4"></path><path d="M15 2H6a2 2 0 0 0-2 2v16a2 2 0 0 0 2 2h12a2 2 0 0 0 2-2V7z"></path></svg>
<svg class="i" style="left:1744px;top:1730px;width:24px;height:24px;color:#6366f1;stroke-width:2" viewBox="0 0 24 24"><circle cx="18" cy="18" r="3"></circle><circle cx="6" cy="6" r="3"></circle><path d="M6 21V9a9 9 0 0 0 9 9"></path></svg>
<svg class="i" style="left:1810px;top:1730px;width:24px;height:24px;color:#ef4444;stroke-width:2" viewBox="0 0 24 24"><path d="M3 6h18"></path><path d="M19 6v14c0 1-1 2-2 2H7c-1 0-2-1-2-2V6"></path><path d="M8 6V4c0-1 1-2 2-2h4c1 0 2 1 2 2v2"></path><line x1="10" x2="10" y1="11" y2="17"></line><line x1="14" x2="14" y1="11" y2="17"></line></svg>


</body></html>
